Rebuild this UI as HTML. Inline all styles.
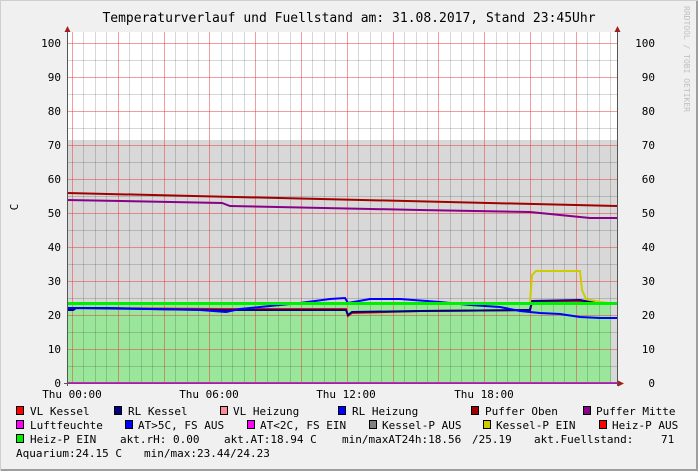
<!DOCTYPE html>
<html><head><meta charset="utf-8"><style>
html,body{margin:0;padding:0;background:#f0f0f0;}
svg{display:block;}
text{font-family:"DejaVu Sans Mono","Liberation Mono",monospace;white-space:pre;}
</style></head><body>
<svg id="s" width="698" height="471" viewBox="0 0 698 471" xmlns="http://www.w3.org/2000/svg">
<rect x="0" y="0" width="698" height="471" fill="#f0f0f0"/>
<rect x="0.5" y="0.5" width="697" height="470" fill="none" stroke="#cfcfcf"/>
<rect x="1" y="469" width="697" height="2" fill="#9e9e9e"/>
<rect x="696" y="1" width="2" height="470" fill="#9e9e9e"/>
<text x="349" y="22" font-size="13" text-anchor="middle" fill="#000">Temperaturverlauf und Fuellstand am: 31.08.2017, Stand 23:45Uhr</text>
<text transform="translate(684,6) rotate(90)" font-size="8" fill="#c0c0c0">RRDTOOL / TOBI OETIKER</text>
<text transform="translate(18,207) rotate(-90)" font-size="11" text-anchor="middle" fill="#000">C</text>
<rect x="68" y="32" width="549" height="351" fill="#ffffff"/>
<rect x="68" y="140" width="549" height="243" fill="#d8d8d8"/>
<rect x="68" y="304" width="543" height="79" fill="#9ae69a"/>
<g id="grid"></g>
<polyline fill="none" stroke="#a00000" stroke-width="2" points="67,193 617,206"/>
<polyline fill="none" stroke="#880088" stroke-width="2" points="67,200 222,203 230,206 420,210 530,212 560,215 590,218 617,218"/>
<polyline fill="none" stroke="#ff0000" stroke-width="2" points="67,310 73,310 76,308 220,309 300,309 346,309 348,316 352,313 420,311 530,310 532,302 580,301 590,303 617,304"/>
<polyline fill="none" stroke="#000080" stroke-width="2" points="67,310 73,310 76,308 220,310 300,310 346,310 348,315 352,312 420,311 530,310 532,301 580,300 590,302 617,304"/>
<polyline fill="none" stroke="#0000ff" stroke-width="2" points="67,308 110,308 150,309 200,310 226,312 240,309 270,306 300,303 330,299 345,298 348,303 370,299 400,299 440,302 470,305 500,307 520,311 540,313 560,314 580,317 600,318 617,318"/>
<polyline fill="none" stroke="#cccc00" stroke-width="2" points="530,303 532,275 536,271 580,271 582,290 586,299 600,302 617,304"/>
<rect x="67" y="302" width="550" height="3" fill="#00ee00"/>
<rect x="67" y="382" width="550" height="2" fill="#ff00ff"/>
<line x1="67.5" y1="30" x2="67.5" y2="386" stroke="#555" stroke-width="1"/>
<line x1="617.5" y1="30" x2="617.5" y2="386" stroke="#555" stroke-width="1"/>
<line x1="64" y1="383.5" x2="620" y2="383.5" stroke="#555" stroke-width="1"/>
<polygon points="64.5,32 70.5,32 67.5,26" fill="#a02020"/>
<polygon points="614.5,32 620.5,32 617.5,26" fill="#a02020"/>
<polygon points="618,380.5 618,386.5 624,383.5" fill="#a02020"/>
<g font-size="11" fill="#000" text-anchor="end">
<text x="61" y="47">100</text><text x="61" y="81">90</text><text x="61" y="115">80</text><text x="61" y="149">70</text><text x="61" y="183">60</text><text x="61" y="217">50</text><text x="61" y="251">40</text><text x="61" y="285">30</text><text x="61" y="319">20</text><text x="61" y="353">10</text><text x="61" y="387">0</text>
</g>
<g font-size="11" fill="#000" text-anchor="end">
<text x="655" y="47">100</text><text x="655" y="81">90</text><text x="655" y="115">80</text><text x="655" y="149">70</text><text x="655" y="183">60</text><text x="655" y="217">50</text><text x="655" y="251">40</text><text x="655" y="285">30</text><text x="655" y="319">20</text><text x="655" y="353">10</text><text x="655" y="387">0</text>
</g>
<g font-size="11" fill="#000" text-anchor="middle">
<text x="72" y="398">Thu 00:00</text><text x="209" y="398">Thu 06:00</text><text x="346" y="398">Thu 12:00</text><text x="484" y="398">Thu 18:00</text>
</g>
<g stroke="#000" stroke-width="1">
<rect x="16.5" y="406.5" width="7" height="8" fill="#ff0000"/>
<rect x="114.5" y="406.5" width="7" height="8" fill="#000080"/>
<rect x="220.5" y="406.5" width="7" height="8" fill="#ff8899"/>
<rect x="338.5" y="406.5" width="7" height="8" fill="#0000ff"/>
<rect x="471.5" y="406.5" width="7" height="8" fill="#a00000"/>
<rect x="583.5" y="406.5" width="7" height="8" fill="#880088"/>
<rect x="16.5" y="420.5" width="7" height="8" fill="#ff00ff"/>
<rect x="125.5" y="420.5" width="7" height="8" fill="#0000ff"/>
<rect x="247.5" y="420.5" width="7" height="8" fill="#ff00ff"/>
<rect x="369.5" y="420.5" width="7" height="8" fill="#808080"/>
<rect x="483.5" y="420.5" width="7" height="8" fill="#cccc00"/>
<rect x="599.5" y="420.5" width="7" height="8" fill="#ff0000"/>
<rect x="16.5" y="434.5" width="7" height="8" fill="#00ee00"/>
</g>
<g font-size="11" fill="#000">
<text x="30" y="415">VL Kessel</text>
<text x="128" y="415">RL Kessel</text>
<text x="233" y="415">VL Heizung</text>
<text x="352" y="415">RL Heizung</text>
<text x="485" y="415">Puffer Oben</text>
<text x="596" y="415">Puffer Mitte</text>
<text x="30" y="429">Luftfeuchte</text>
<text x="138" y="429">AT&gt;5C, FS AUS</text>
<text x="260" y="429">AT&lt;2C, FS EIN</text>
<text x="382" y="429">Kessel-P AUS</text>
<text x="496" y="429">Kessel-P EIN</text>
<text x="612" y="429">Heiz-P AUS</text>
<text x="30" y="443">Heiz-P EIN</text>
<text x="120" y="443">akt.rH: 0.00</text>
<text x="224" y="443">akt.AT:18.94 C</text>
<text x="342" y="443">min/maxAT24h:18.56</text>
<text x="472" y="443">/25.19</text>
<text x="534" y="443">akt.Fuellstand:</text>
<text x="661" y="443">71</text>
<text x="16" y="457">Aquarium:24.15 C</text>
<text x="144" y="457">min/max:23.44/24.23</text>
</g>
</svg>
<script>
(function(){
var g=document.getElementById('grid'),h='';
var minor='rgba(0,0,0,0.16)',major='rgba(230,60,60,0.5)';
for(var i=0;i<48;i++){var x=Math.round(72+i*11.45)+0.5;if(x>617)break;
 h+='<line x1="'+x+'" y1="32" x2="'+x+'" y2="383" stroke="'+(i%4==0?major:minor)+'" stroke-width="1"/>';}
for(var j=1;j<=20;j++){var y=383-j*17+0.5;
 h+='<line x1="68" y1="'+y+'" x2="617" y2="'+y+'" stroke="'+(j%2==0?major:minor)+'" stroke-width="1"/>';}
g.innerHTML=h;
})();
</script>
</body></html>
